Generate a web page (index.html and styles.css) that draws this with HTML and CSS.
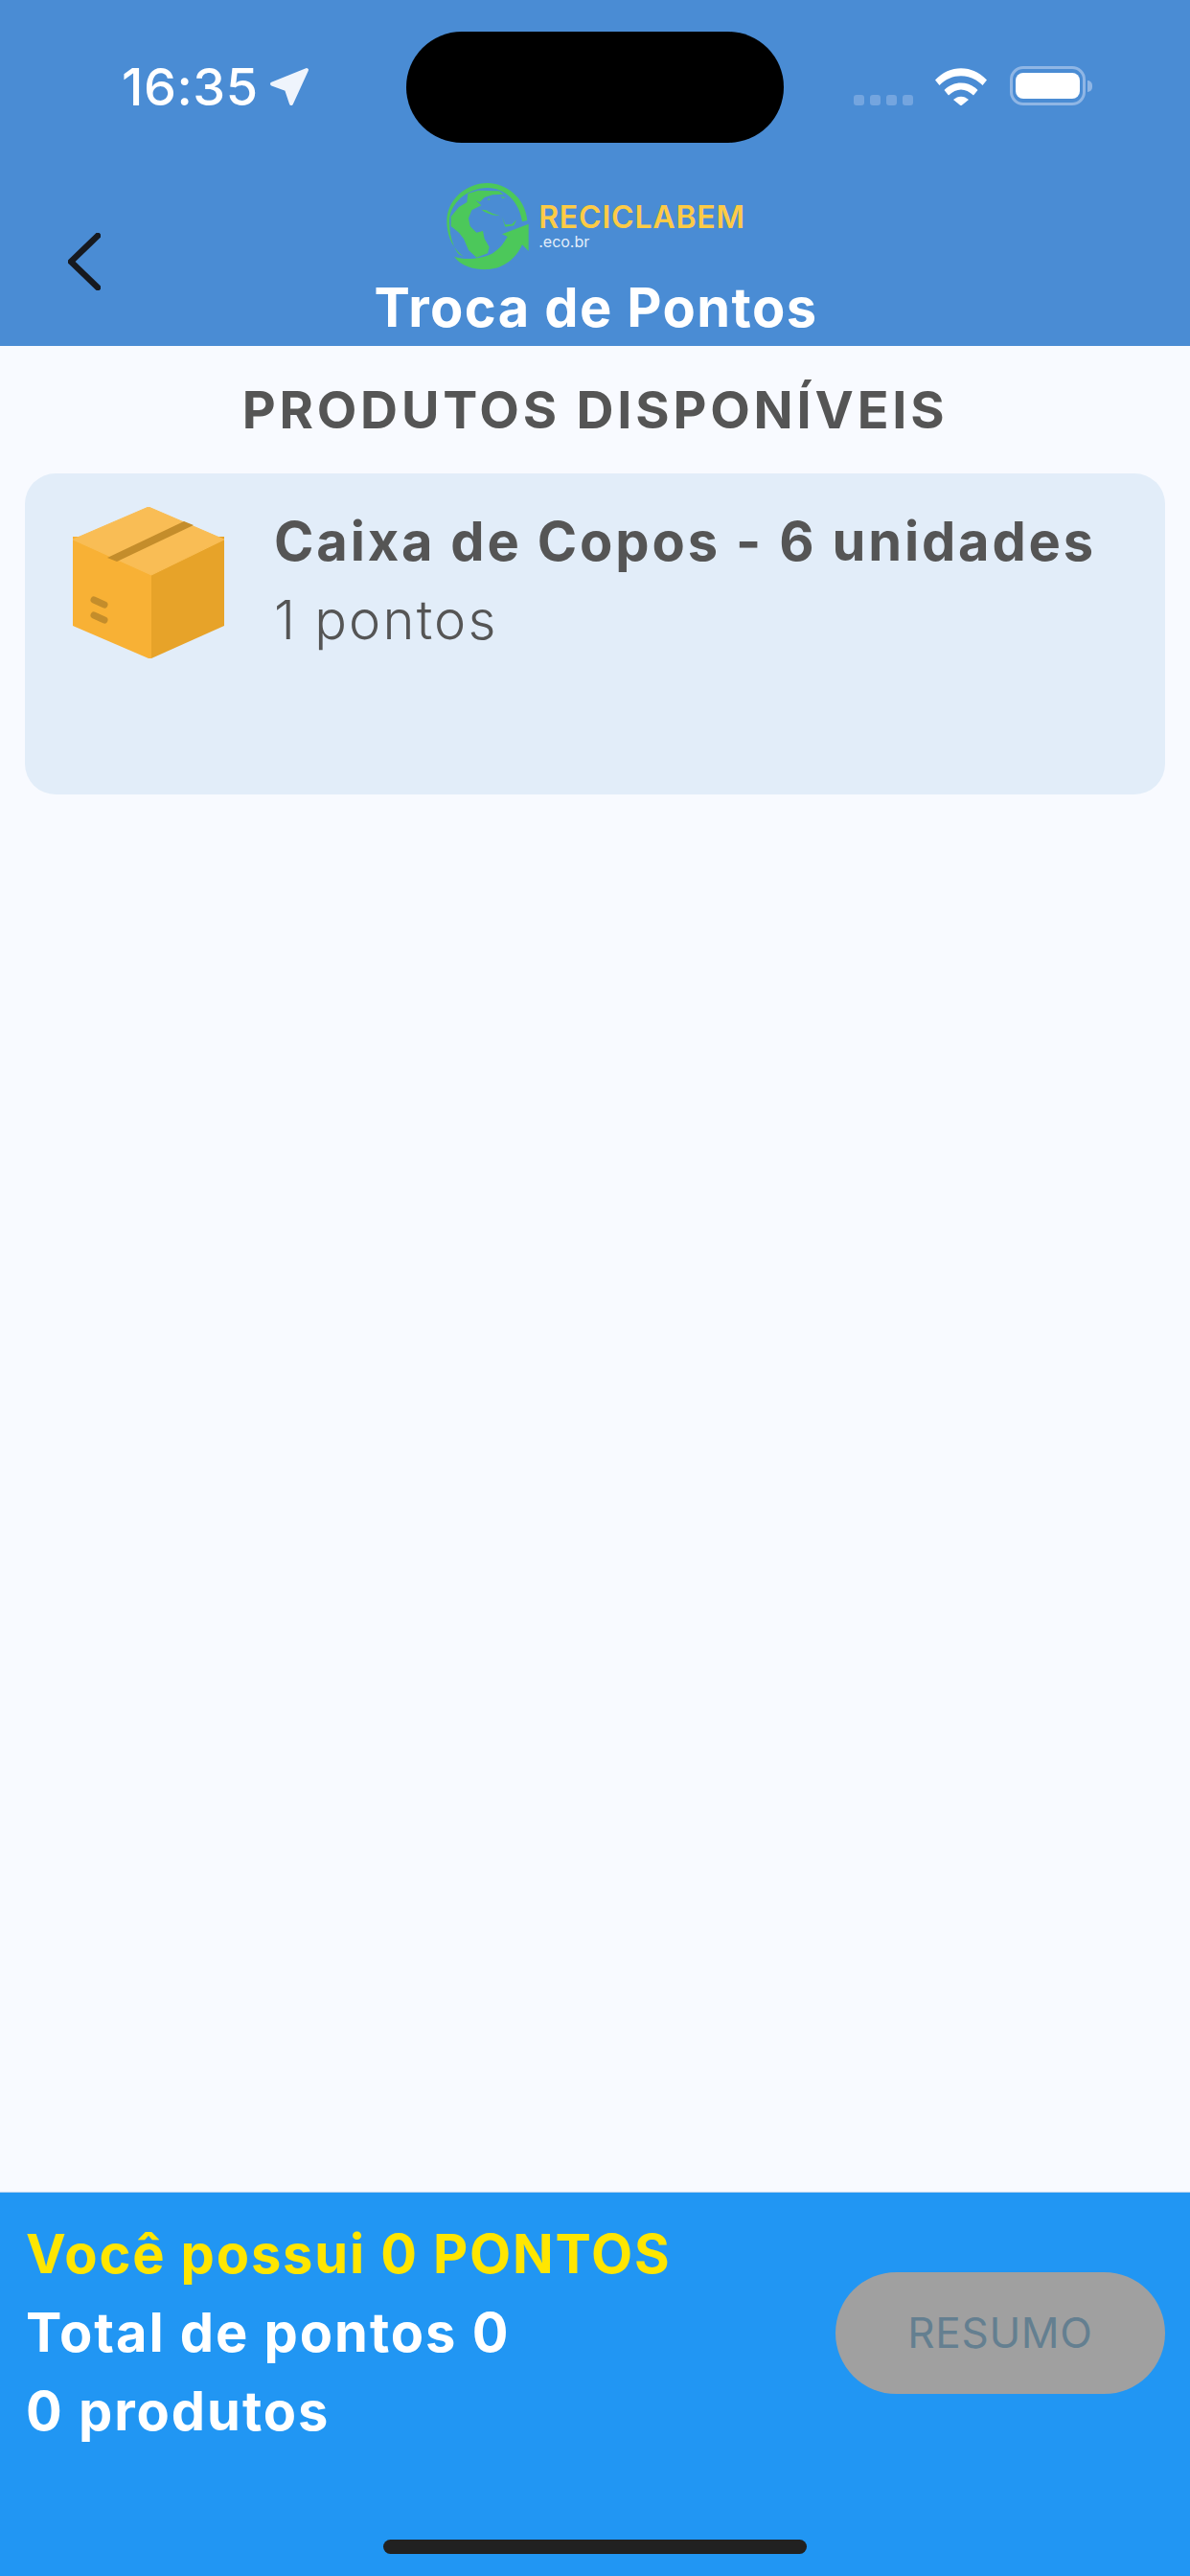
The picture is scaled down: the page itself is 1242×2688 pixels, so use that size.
FILE: index.html
```html
<!DOCTYPE html>
<html lang="pt-BR">
<head>
<meta charset="utf-8">
<title>Troca de Pontos</title>
<link rel="stylesheet" href="styles.css">
</head>
<body>
<div class="screen">
  <header class="header">
    <div class="status">
      <div class="status-left">
        <span class="time">16:35</span>
        <svg class="loc" viewBox="0 0 42 42"><path d="M39 4 3 18.500 18 24 23 39Z" fill="#eff4fc" stroke="#eff4fc" stroke-width="4" stroke-linejoin="round"/></svg>
      </div>
      <div class="island"></div>
      <div class="status-right">
        <div class="cell"><i></i><i></i><i></i><i></i></div>
        <svg class="wifi" viewBox="0 0 54 40"><path d="M0 13.5C15 -3 39 -3 54 13.5L49.500 19C37 6 17 6 4.500 19Z" fill="#fff"/><path d="M9.500 24C19 14 35 14 44.500 24L40 29.500C31.500 21.500 22.500 21.500 14 29.500Z" fill="#fff"/><path d="M19 34C24 29.500 30 29.500 35 34L27 40.500Z" fill="#fff"/></svg>
        <div class="battery"><div class="battery-fill"></div></div>
        <div class="battery-nub"></div>
      </div>
    </div>
    <div class="nav">
      <svg class="back" viewBox="0 0 34 60"><path d="M31 3 3 30 31 57" fill="none" stroke="#16191f" stroke-width="6.500" stroke-linecap="round" stroke-linejoin="round"/></svg>
      <div class="nav-center">
        <div class="logo">
          <svg class="globe" viewBox="0 0 300 300">
            <path d="M274 132C268 60 205 15 150 15C80 15 22 70 22 135C22 185 45 225 75 245L60 238C40 215 30 175 30 135C30 80 85 30 150 30C205 30 250 75 258 136Z" fill="#4cc85a"/>
            <path d="M88 48 120 38 185 40 200 50 165 52 140 60 125 75 112 68 130 85 100 100 90 125 95 150 115 170 135 165 140 190 155 215 150 235 115 248 90 225 75 190 60 170 35 150 35 120 60 90 85 75Z" fill="#4cc85a"/>
            <path d="M130 98 145 100 165 110 190 118 165 115 140 105ZM195 120 205 145 225 145 240 130 232 148 205 152ZM150 62 158 66 152 70ZM192 58 208 60 196 63Z" fill="#4cc85a"/>
            <path d="M45 245C70 280 120 288 155 285C200 282 240 250 258 208L278 228 278 143 195 175 212 183C195 215 165 245 125 248C95 255 65 252 45 245Z" fill="#4cc85a"/>
          </svg>
          <div class="brand">
            <span class="brand-name">RECICLABEM</span>
            <span class="brand-sub">.eco.br</span>
          </div>
        </div>
        <h1 class="title">Troca de Pontos</h1>
      </div>
    </div>
  </header>
  <main class="main">
    <h2 class="section">PRODUTOS DISPONÍVEIS</h2>
    <article class="card">
      <svg class="box" viewBox="76 529 158 158">
        <path d="M76 560H158V687L155 687 76 653Z" fill="#f8b135"/>
        <path d="M234 560H158V687L234 653Z" fill="#e7a329"/>
        <path d="M76 563 155 529 234 563 158 600Z" fill="#f9bd55" stroke="#f9bd55" stroke-width="1" stroke-linejoin="round"/>
        <path d="M112 582 192 544 202 548 122 586Z" fill="#c48d2b"/>
        <path d="M98 626 109 631M98 642 109 647" fill="none" stroke="#c48d2b" stroke-width="7" stroke-linecap="round"/>
      </svg>
      <div class="card-text">
        <div class="card-title">Caixa de Copos - 6 unidades</div>
        <div class="card-points">1 pontos</div>
      </div>
    </article>
  </main>
  <footer class="footer">
    <div class="summary">
      <div class="totals">
        <div class="line line-yellow">Você possui 0 PONTOS</div>
        <div class="line">Total de pontos 0</div>
        <div class="line">0 produtos</div>
      </div>
      <button class="resume" type="button">RESUMO</button>
    </div>
    <div class="home-bar"></div>
  </footer>
</div>
</body>
</html>
```
FILE: styles.css
```css
* { box-sizing: border-box; }
html, body { margin: 0; padding: 0; }
body { font-family: Inter, "Liberation Sans", sans-serif; background: #f8faff; }
.screen { width: 1242px; height: 2688px; display: flex; flex-direction: column; overflow: hidden; }

.header { height: 361px; background: #4a8cd4; display: flex; flex-direction: column; flex: none; }
.status { display: grid; grid-template-columns: 424px 394px 1fr; height: 149px; padding-top: 33px; flex: none; }
.status-left { display: flex; align-items: flex-start; padding: 36px 0 0 127px; gap: 11px; }
.time { color: #fff; font-size: 54px; font-weight: 500; line-height: 44px; letter-spacing: 0.5px; }
.loc { width: 42px; height: 42px; flex: none; }
.island { background: #000; border-radius: 58px; height: 116px; }
.status-right { display: flex; align-items: flex-start; padding: 36px 0 0 73px; }
.cell { display: flex; gap: 6px; margin-top: 30px; }
.cell i { display: block; width: 11px; height: 11px; border-radius: 3px; background: #74a5df; }
.wifi { width: 54px; height: 40px; margin: 1px 0 0 23px; flex: none; }
.battery { width: 79px; height: 41px; margin-left: 24px; border: 3px solid #8fb6e5; border-radius: 14px; padding: 4px 3px; flex: none; }
.battery-fill { height: 100%; background: #fff; border-radius: 8px; }
.battery-nub { width: 5px; height: 12px; margin: 15px 0 0 2px; background: #8fb6e5; border-radius: 0 6px 6px 0; }

.nav { flex: 1; display: grid; grid-template-columns: 1fr auto 1fr; padding-top: 37px; }
.back { width: 34px; height: 60px; margin: 57px 0 0 71px; }
.nav-center { display: flex; flex-direction: column; align-items: center; }
.logo { display: flex; align-items: flex-start; height: 101px; margin-right: 5px; }
.globe { width: 100px; height: 100px; flex: none; }
.brand { display: flex; flex-direction: column; margin-left: 3px; padding-top: 26px; }
.brand-name { color: #fdcb45; font-size: 32px; font-weight: 600; line-height: 30px; letter-spacing: 0.8px; }
.brand-sub { color: #e3eefa; font-size: 16px; line-height: 20px; }
.title { margin: 0 0 0 2px; color: #fff; font-size: 56px; font-weight: 700; line-height: 68px; letter-spacing: 1.4px; }

.main { flex: 1; display: flex; flex-direction: column; padding: 0 26px; }
.section { margin: 0; height: 133px; padding-top: 31px; text-align: center; color: #555; font-size: 54px; font-weight: 650; line-height: 72px; letter-spacing: 3.8px; }
.card { height: 335px; background: #e2edf9; border-radius: 32px; display: flex; align-items: flex-start; padding: 35px 50px; gap: 52px; }
.box { width: 158px; height: 158px; flex: none; }
.card-text { display: flex; flex-direction: column; margin-top: -5px; }
.card-title { color: #555; font-size: 56px; font-weight: 650; line-height: 82px; letter-spacing: 2.85px; white-space: nowrap; }
.card-points { color: #555; font-size: 56px; font-weight: 300; line-height: 82px; letter-spacing: 2.2px; }

.footer { height: 401px; flex: none; background: #2196f3; border-top: 1px solid #b5d3f0; display: flex; flex-direction: column; }
.summary { display: flex; align-items: center; justify-content: space-between; padding: 23px 26px 0 27px; }
.line { color: #fff; font-size: 56px; font-weight: 700; line-height: 82px; letter-spacing: 1.95px; white-space: nowrap; }
.line-yellow { letter-spacing: 1.85px; color: #ffe600; }
.resume { width: 344px; height: 127px; border: 0; border-radius: 64px; background: #a0a0a0; color: #647f90; font-family: inherit; font-size: 44px; font-weight: 400; letter-spacing: 0.7px; padding: 0; }
.home-bar { width: 442px; height: 15px; margin: auto auto 23px; background: #212121; border-radius: 8px; }
```
